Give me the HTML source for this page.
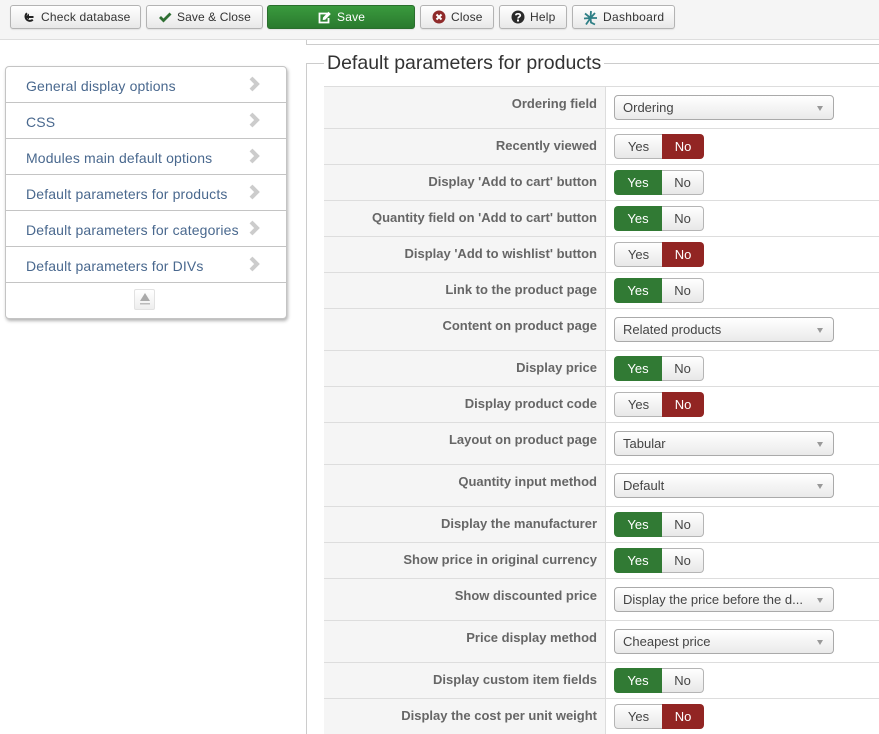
<!DOCTYPE html>
<html><head><meta charset="utf-8"><style>
html,body{margin:0;padding:0}
body{width:879px;height:734px;overflow:hidden;position:relative;background:#fff;font-family:"Liberation Sans",sans-serif;color:#333}
.a{position:absolute}
.tb{left:0;top:0;width:879px;height:39px;background:#f5f5f5;border-bottom:1px solid #dedede}
.b{position:absolute;top:5px;height:22px;line-height:22px;border:1px solid #b3b3b3;border-radius:3px;background:linear-gradient(#fff,#e8e8e8);font-size:12px;letter-spacing:.2px;color:#333;white-space:nowrap;box-sizing:content-box;box-shadow:0 1px 1px rgba(0,0,0,.08)}
.b span{position:absolute;top:0}
.b svg{position:absolute}
.side{left:5px;top:66px;width:280px;height:251px;border:1px solid #c4c4c4;border-radius:4px;background:#fff;box-shadow:1px 2px 3px rgba(0,0,0,.3)}
.si{position:absolute;left:0;width:280px;height:35px;border-bottom:1px solid #c4c4c4;color:#49688e;font-size:14px;letter-spacing:.15px;line-height:39px;text-indent:20px;white-space:nowrap}
.si svg{position:absolute;left:242px;top:8px}
.r{position:absolute;left:324px;width:555px;border-top:1px solid #ddd;box-sizing:border-box}
.l{position:absolute;left:0;top:0;bottom:0;width:281px;background:#f5f5f5;border-right:1px solid #ddd;box-sizing:content-box}
.l span{position:absolute;right:8px;top:9px;font-size:13px;line-height:16px;font-weight:bold;color:#666;white-space:nowrap}
.s{position:absolute;left:290px;top:8px;width:218px;height:23px;border:1px solid #aaa;border-radius:4px;background:linear-gradient(#fff,#eaeaea);font-size:13px;line-height:24px;text-indent:8px;color:#444;white-space:nowrap}
.s i{position:absolute;left:202px;top:10px;width:0;height:0;border-left:3.5px solid transparent;border-right:3.5px solid transparent;border-top:5px solid #999}
.t{position:absolute;left:290px;top:5px;width:90px;height:25px;font-size:13px;line-height:26px;text-align:center}
.t b{font-weight:normal;position:absolute;top:0;height:25px;box-sizing:border-box}
.y{left:0;width:48px}.n{left:48px;width:42px}
.off{background:linear-gradient(#fff,#e8e8e8);border:1px solid #b5b5b5;color:#444;line-height:24px}
.y.off{border-right:0;border-radius:4px 0 0 4px}.n.off{border-left:0;border-radius:0 4px 4px 0}
.gr{background:#317a34;color:#fff;border-radius:4px 0 0 4px}
.rd{background:#922523;color:#fff;border-radius:0 4px 4px 0}
</style></head><body>
<div class="a tb"></div>
<div class="b" style="left:10px;width:129px"><svg style="left:11px;top:5px" width="13" height="13" viewBox="0 0 13 13"><path d="M5 2.200A4.300 4.300 0 1 0 10.800 8.800" fill="none" stroke="#222" stroke-width="2"/><path d="M3.500 6 7 2.500V5h4.500v2H7v1.500z" fill="#222"/></svg><span style="left:30px">Check database</span></div>
<div class="b" style="left:146px;width:115px"><svg style="left:11px;top:5px" width="15" height="12" viewBox="0 0 15 12"><path d="M2 6l3.500 3.500L12.500 2.500" fill="none" stroke="#2f6f33" stroke-width="2.800"/></svg><span style="left:30px;letter-spacing:.1px">Save &amp; Close</span></div>
<div class="b" style="left:267px;width:146px;background:linear-gradient(#3a9a3e,#2a7a2e);border-color:#2a6e2d;color:#fff"><svg style="left:50px;top:5px" width="14" height="13" viewBox="0 0 14 13"><path d="M10 2.500H1.500V11.500H10.500V7" fill="none" stroke="#fff" stroke-width="1.800"/><path d="M5 6.500 10.500.800 12.800 3 7.200 8.700 4.700 9z" fill="#fff"/></svg><span style="left:69px">Save</span></div>
<div class="b" style="left:420px;width:72px"><svg style="left:11px;top:4px" width="14" height="14" viewBox="0 0 14 14"><circle cx="7" cy="7" r="6.500" fill="#8f2a2a"/><path d="M4.500 4.500l5 5m0-5l-5 5" stroke="#fff" stroke-width="2"/></svg><span style="left:30px">Close</span></div>
<div class="b" style="left:499px;width:66px"><svg style="left:11px;top:4px" width="14" height="14" viewBox="0 0 14 14"><circle cx="7" cy="7" r="6.500" fill="#2a2a2a"/><path d="M4.800 5.300C5 3.300 9.300 3.300 9.300 5.500 9.300 7 7 6.800 7 8.500" fill="none" stroke="#fff" stroke-width="1.700"/><rect x="6" y="9.500" width="2" height="2" fill="#fff"/></svg><span style="left:30px">Help</span></div>
<div class="b" style="left:572px;width:101px"><svg style="left:10px;top:4px" width="15" height="16" viewBox="0 0 15 16"><path d="M8 1 7.500 8 2 3.500M7.500 8 1 8.500M7.500 8 3 14.500M7.500 8 8 12.500 12 14.500M7.500 8 14 8M7.500 8 12 3" fill="none" stroke="#2f7f86" stroke-width="1.800"/></svg><span style="left:30px;letter-spacing:.3px">Dashboard</span></div>

<div class="a" style="left:306px;top:40px;width:573px;height:4px;border-bottom:1px solid #ccc;border-left:1px solid #ccc"></div>
<div class="a" style="left:306px;top:63px;width:1px;height:671px;background:#ccc"></div>
<div class="a" style="left:306px;top:63px;width:18px;height:1px;background:#ccc"></div>
<div class="a" style="left:604px;top:63px;width:275px;height:1px;background:#ccc"></div>
<div class="a" style="left:327px;top:51px;font-size:19.5px;line-height:24px;color:#333;white-space:nowrap">Default parameters for products</div>

<div class="a side">
<div class="si" style="top:0">General display options<svg width="14" height="18" viewBox="0 0 14 18"><path d="M3 3l6 6-6 6" fill="none" stroke="#ccc" stroke-width="4"/></svg></div>
<div class="si" style="top:36px">CSS<svg width="14" height="18" viewBox="0 0 14 18"><path d="M3 3l6 6-6 6" fill="none" stroke="#ccc" stroke-width="4"/></svg></div>
<div class="si" style="top:72px">Modules main default options<svg width="14" height="18" viewBox="0 0 14 18"><path d="M3 3l6 6-6 6" fill="none" stroke="#ccc" stroke-width="4"/></svg></div>
<div class="si" style="top:108px">Default parameters for products<svg width="14" height="18" viewBox="0 0 14 18"><path d="M3 3l6 6-6 6" fill="none" stroke="#ccc" stroke-width="4"/></svg></div>
<div class="si" style="top:144px">Default parameters for categories<svg width="14" height="18" viewBox="0 0 14 18"><path d="M3 3l6 6-6 6" fill="none" stroke="#ccc" stroke-width="4"/></svg></div>
<div class="si" style="top:180px">Default parameters for DIVs<svg width="14" height="18" viewBox="0 0 14 18"><path d="M3 3l6 6-6 6" fill="none" stroke="#ccc" stroke-width="4"/></svg></div>
<div class="a" style="left:128px;top:222px;width:19px;height:19px;border:1px solid #e2e2e2;border-radius:2px;background:linear-gradient(#fff,#eee)"><svg class="a" style="left:3px;top:2px" width="14" height="14" viewBox="0 0 14 14"><path d="M7 1l5 8H2z" fill="#aaa"/><rect x="2" y="11" width="10" height="1.500" fill="#bbb"/></svg></div>
</div>

<div class="r" style="top:86px;height:42px"><div class="l"><span>Ordering field</span></div><div class="s">Ordering<i></i></div></div>
<div class="r" style="top:128px;height:36px"><div class="l"><span>Recently viewed</span></div><div class="t"><b class="y off">Yes</b><b class="n rd">No</b></div></div>
<div class="r" style="top:164px;height:36px"><div class="l"><span>Display 'Add to cart' button</span></div><div class="t"><b class="y gr">Yes</b><b class="n off">No</b></div></div>
<div class="r" style="top:200px;height:36px"><div class="l"><span>Quantity field on 'Add to cart' button</span></div><div class="t"><b class="y gr">Yes</b><b class="n off">No</b></div></div>
<div class="r" style="top:236px;height:36px"><div class="l"><span>Display 'Add to wishlist' button</span></div><div class="t"><b class="y off">Yes</b><b class="n rd">No</b></div></div>
<div class="r" style="top:272px;height:36px"><div class="l"><span>Link to the product page</span></div><div class="t"><b class="y gr">Yes</b><b class="n off">No</b></div></div>
<div class="r" style="top:308px;height:42px"><div class="l"><span>Content on product page</span></div><div class="s">Related products<i></i></div></div>
<div class="r" style="top:350px;height:36px"><div class="l"><span>Display price</span></div><div class="t"><b class="y gr">Yes</b><b class="n off">No</b></div></div>
<div class="r" style="top:386px;height:36px"><div class="l"><span>Display product code</span></div><div class="t"><b class="y off">Yes</b><b class="n rd">No</b></div></div>
<div class="r" style="top:422px;height:42px"><div class="l"><span>Layout on product page</span></div><div class="s">Tabular<i></i></div></div>
<div class="r" style="top:464px;height:42px"><div class="l"><span>Quantity input method</span></div><div class="s">Default<i></i></div></div>
<div class="r" style="top:506px;height:36px"><div class="l"><span>Display the manufacturer</span></div><div class="t"><b class="y gr">Yes</b><b class="n off">No</b></div></div>
<div class="r" style="top:542px;height:36px"><div class="l"><span>Show price in original currency</span></div><div class="t"><b class="y gr">Yes</b><b class="n off">No</b></div></div>
<div class="r" style="top:578px;height:42px"><div class="l"><span>Show discounted price</span></div><div class="s">Display the price before the d...<i></i></div></div>
<div class="r" style="top:620px;height:42px"><div class="l"><span>Price display method</span></div><div class="s">Cheapest price<i></i></div></div>
<div class="r" style="top:662px;height:36px"><div class="l"><span>Display custom item fields</span></div><div class="t"><b class="y gr">Yes</b><b class="n off">No</b></div></div>
<div class="r" style="top:698px;height:36px"><div class="l"><span>Display the cost per unit weight</span></div><div class="t"><b class="y off">Yes</b><b class="n rd">No</b></div></div>
</body></html>
